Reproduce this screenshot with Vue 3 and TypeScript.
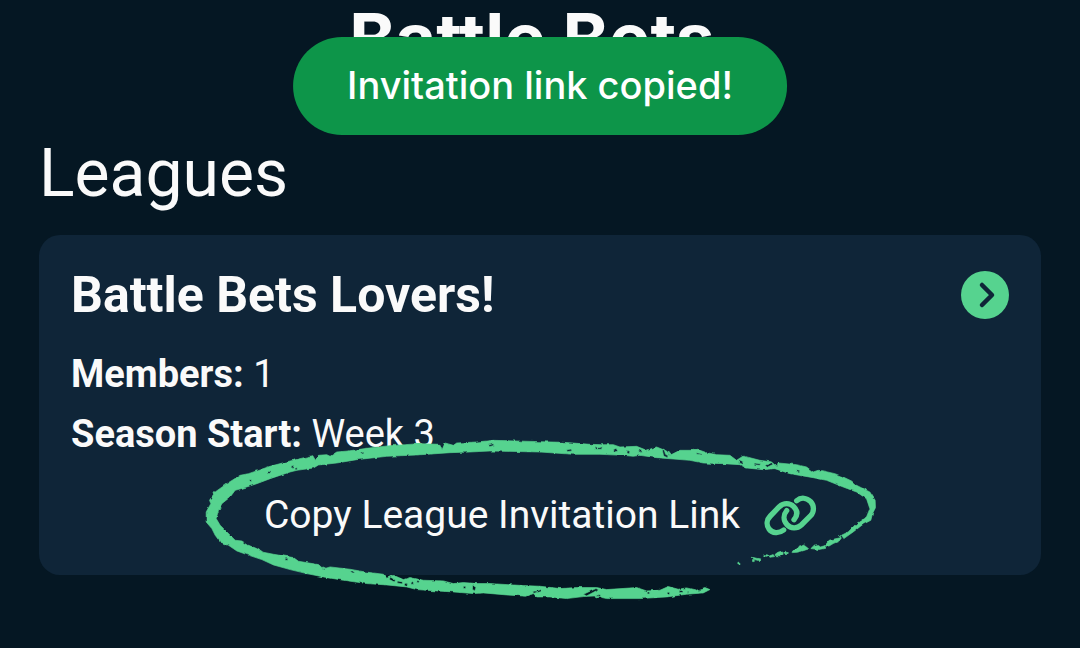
<script setup lang="ts">
import { ref } from 'vue'

interface League {
  name: string
  members: number
  seasonStart: string
}

const league: League = { name: 'Battle Bets Lovers!', members: 1, seasonStart: 'Week 3' }
const toast = ref('Invitation link copied!')

function copyLink(): void {
  toast.value = 'Invitation link copied!'
}
</script>

<template>
  <main class="page">
    <h1 class="brand">Battle Bets</h1>
    <div class="toast" role="status">{{ toast }}</div>

    <h2 class="heading">Leagues</h2>
    <section class="card">
      <header class="card-head">
        <h3 class="name">{{ league.name }}</h3>
        <button class="open" type="button" aria-label="Open league">
          <svg viewBox="0 0 48 48" aria-hidden="true">
            <path d="M21 14l10 10-10 10" fill="none" stroke="#0f2538" stroke-width="4.500" stroke-linecap="round" stroke-linejoin="round" />
          </svg>
        </button>
      </header>
      <p class="fact"><strong>Members:</strong> {{ league.members }}</p>
      <p class="fact"><strong>Season Start:</strong> {{ league.seasonStart }}</p>

      <div class="invite">
        <button class="copy" type="button" @click="copyLink">
          <span>Copy League Invitation Link</span>
          <svg class="chain" viewBox="0 0 156 126" aria-hidden="true">
            <g fill="none" stroke="#56d38f" stroke-width="16" stroke-linecap="round" stroke-linejoin="round">
              <path d="M59 108C44 120 25 118 15 105C6 92 8 77 19 66L46 38C59 26 77 26 89 38C101 50 101 64 90 77" />
              <path d="M98 20C111 9 128 11 140 23C151 35 151 53 140 65L112 93C99 105 80 104 69 92C57 79 58 62 68 50" />
            </g>
          </svg>
        </button>
        <svg class="scribble" viewBox="40 50 2020 500" aria-hidden="true">
          <defs>
            <filter id="rough" x="-2%" y="-5%" width="104%" height="110%">
              <feTurbulence type="fractalNoise" baseFrequency="0.05" numOctaves="2" seed="4" result="n" />
              <feDisplacementMap in="SourceGraphic" in2="n" scale="8" xChannelSelector="R" yChannelSelector="G" />
            </filter>
          </defs>
          <g fill="#56d38f" stroke="#56d38f" stroke-width="2" filter="url(#rough)">
            <path
              fill-rule="evenodd"
              d="M1962 355L1990 335L2020 312L2043 300L2048 280L2057 262L2056 240L2040 215L2020 205L2000 195L1985 182L1960 170L1935 160L1900 152L1885 150L1870 155L1850 140L1820 133L1765 128L1762 140L1745 125L1710 120L1660 107L1640 120L1620 105L1580 103L1550 97L1530 90L1470 90L1440 105L1430 92L1400 80L1370 90L1340 78L1290 80L1270 73L1235 73L1200 72L1120 66L1050 64L910 60L860 65L800 68L790 75L765 68L756 88L750 72L690 70L600 76L530 84L475 92L440 95L420 108L410 103L385 105L376 120L368 106L300 122L240 138L175 160L150 165L110 190L75 215L58 240L62 250L48 275L48 305L65 325L75 345L90 365L115 375L140 392L170 403L215 418L250 434L300 448L350 460L400 470L460 480L530 490L590 494L650 500L680 508L740 512L790 515L850 520L880 518L950 524L1010 528L1030 520L1040 530L1080 530L1130 535L1180 529L1215 527L1250 535L1350 535L1430 530L1490 522L1540 518L1560 508L1545 502L1520 510L1490 503L1465 507L1435 499L1410 510L1370 512L1340 502L1250 508L1220 502L1160 502L1110 505L1050 498L1000 496L900 490L860 490L820 487L790 490L760 482L700 480L660 472L640 478L610 465L590 474L580 462L525 455L480 447L420 440L400 446L385 433L325 423L310 412L250 402L215 395L200 385L175 375L155 362L135 360L120 345L100 325L90 315L78 295L85 270L95 250L120 230L135 210L160 203L200 190L240 175L300 155L320 150L370 143L385 134L440 128L500 118L590 108L680 104L780 97L840 95L900 92L1050 95L1150 102L1230 102L1300 105L1330 108L1350 105L1400 112L1500 120L1540 128L1600 130L1650 133L1670 143L1720 148L1755 145L1800 160L1870 172L1910 180L1960 200L2000 215L2030 235L2040 265L2030 290L2000 310L1975 335L1955 345Z
                 M303 137l8 -2l1 6l-8 2Z M315 142l6 0l0 7l-6 -1Z M233 157l8 -6l2 4l-7 6Z M178 178l6 0l0 6l-6 0Z M515 95l6 0l0 6l-6 0Z M895 74l14 -4l4 5l-14 4Z
                 M1130 88l14 -2l2 6l-14 2Z M1215 78l10 5l12 -4l-2 8l-18 0Z M1270 88l8 -4l6 8l-10 3Z M1312 90l8 3l-2 8l-7 -2Z M1345 92l8 -6l4 10l-9 3Z M1422 86l5 16l8 4l-3 6l-11 -5l-4 -18Z M1436 92l7 9l-2 5l-7 -4Z
                 M1520 97l14 3l-1 4l-14 -3Z M1648 118l12 6l-4 8l-10 -3Z M1690 128l22 2l-2 5l-20 -2Z M1725 135l20 -8l5 5l-18 9Z M1820 148l10 2l-1 5l-10 -2Z
                 M285 414l8 0l0 7l-8 -1Z M398 440l8 3l-2 6l-8 -3Z M485 452l8 0l0 6l-8 0Z M600 470l16 9l-3 6l-15 -7Z M622 482l16 3l-2 6l-15 -3Z M645 488l8 5l-3 6l-8 -4Z M663 486l7 0l0 6l-7 0Z M682 480l6 3l-3 5l-5 -2Z M820 498l7 0l0 7l-7 0Z M848 494l10 8l-4 10l-7 -5Z M1028 514l24 -6l-1 6l-20 5Z
                 M1180 522l38 -17l8 3l-36 19Z M1215 528l12 -5l3 6l-12 4Z M1372 515l7 0l0 6l-7 0Z M1432 516l7 0l0 7l-7 0Z M1468 511l11 0l0 6l-11 0Z M1490 514l6 0l0 5l-6 0Z M1525 509l8 0l0 5l-8 0Z"
            />
            <path transform="translate(50 0)" d="M1884 356L1904 352L1896 346L1900 346L1904 354L1898 362L1880 370L1868 377L1854 378L1862 376L1860 370L1868 360Z M1813 385L1820 378L1836 376L1842 380L1856 376L1858 384L1840 388Z M1756 396L1764 386L1772 386L1780 376L1786 378L1790 374L1800 380L1806 386L1788 392L1772 396L1758 397Z M1732 396L1738 393L1746 398L1738 404Z M1706 402L1714 396L1728 392L1730 402L1722 407L1706 406Z M1688 407L1700 403L1704 409L1690 411Z M1672 403L1684 404L1682 408L1672 407Z M1637 411L1650 414L1660 416L1656 421L1644 418Z" />
            <path d="M1688 418h5v6h-5Z M1644 426h6v5h-6Z" />
          </g>
        </svg>
      </div>
    </section>
  </main>
</template>

<style>
body {
  margin: 0;
  background: #051723;
}
</style>

<style scoped>
.page {
  position: relative;
  box-sizing: border-box;
  min-height: 100vh;
  padding: 0 39px 72px;
  overflow: hidden;
  background: #051723;
  color: #fafafa;
  font-family: Roboto, "Noto Sans", sans-serif;
}

h1,
h2,
h3,
p {
  margin: 0;
}

.brand {
  padding: 4px 16px 0 0;
  font: 700 70px/70px Inter, sans-serif;
  text-align: center;
}

.toast {
  position: absolute;
  top: 37px;
  left: 50%;
  z-index: 2;
  box-sizing: border-box;
  padding: 24px 54px 26px;
  border-radius: 49px;
  background: #0d9549;
  color: #fff;
  font: 500 38px/48px Inter, sans-serif;
  white-space: nowrap;
  transform: translateX(-50%);
}

.heading {
  margin: 61px 0 22px;
  font-size: 66px;
  font-weight: 400;
  line-height: 78px;
}

.card {
  box-sizing: border-box;
  padding: 30px 32px;
  border-radius: 21px;
  background: #0f2538;
}

.card-head {
  display: flex;
  align-items: center;
  justify-content: space-between;
  margin-bottom: 19px;
}

.name {
  font-size: 50px;
  font-weight: 700;
  line-height: 60px;
}

.open {
  width: 48px;
  height: 48px;
  padding: 0;
  border: 0;
  border-radius: 50%;
  background: #56d38f;
}

.open svg {
  display: block;
}

.fact {
  font-size: 38px;
  font-weight: 400;
  line-height: 60px;
}

.fact strong {
  font-weight: 700;
}

.invite {
  position: relative;
  display: flex;
  justify-content: center;
  margin-top: 21px;
}

.copy {
  display: flex;
  align-items: center;
  gap: 24px;
  padding: 0;
  border: 0;
  background: none;
  color: inherit;
  font: 400 39px/60px Roboto, "Noto Sans", sans-serif;
}

.chain {
  width: 52px;
  height: 42px;
  overflow: visible;
}

.scribble {
  position: absolute;
  top: -48px;
  left: 50%;
  width: 673px;
  transform: translateX(-50%);
  pointer-events: none;
}
</style>
